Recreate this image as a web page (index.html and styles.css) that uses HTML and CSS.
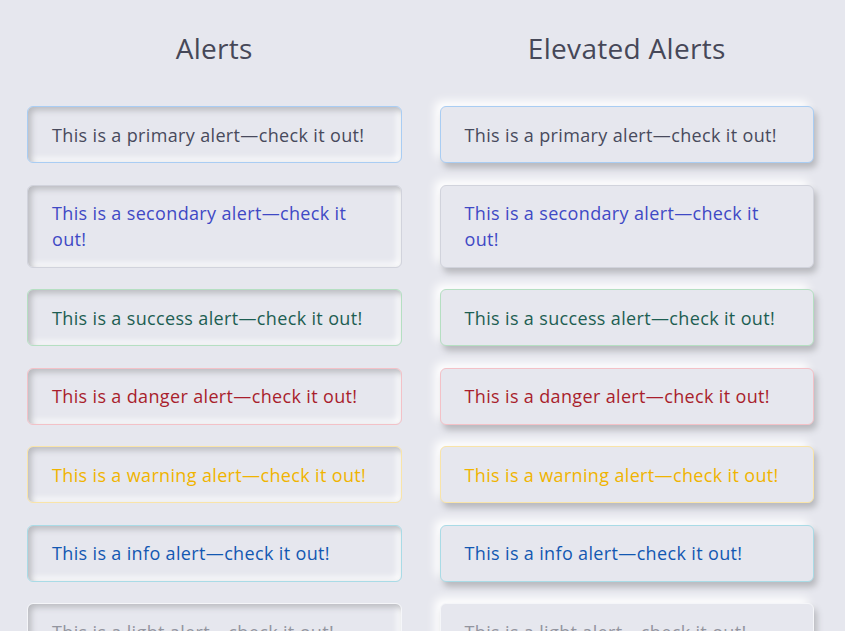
FILE: index.html
```html
<!DOCTYPE html>
<html lang="en">
<head>
  <meta charset="UTF-8" />
  <meta name="viewport" content="width=device-width, initial-scale=1.0" />
  <title>Alerts</title>
  <link rel="stylesheet" href="styles.css">
</head>
<body>

  <div class="page">
    <section class="column">
      <h2>Alerts</h2>
      <div class="alert-list">
        <div class="alert alert-primary">This is a primary alert—check it out!</div>
        <div class="alert alert-secondary">This is a secondary alert—check it out!</div>
        <div class="alert alert-success">This is a success alert—check it out!</div>
        <div class="alert alert-danger">This is a danger alert—check it out!</div>
        <div class="alert alert-warning">This is a warning alert—check it out!</div>
        <div class="alert alert-info">This is a info alert—check it out!</div>
        <div class="alert alert-light">This is a light alert—check it out!</div>
      </div>
    </section>

    <section class="column">
      <h2>Elevated Alerts</h2>
      <div class="alert-list elevated">
        <div class="alert alert-primary">This is a primary alert—check it out!</div>
        <div class="alert alert-secondary">This is a secondary alert—check it out!</div>
        <div class="alert alert-success">This is a success alert—check it out!</div>
        <div class="alert alert-danger">This is a danger alert—check it out!</div>
        <div class="alert alert-warning">This is a warning alert—check it out!</div>
        <div class="alert alert-info">This is a info alert—check it out!</div>
        <div class="alert alert-light">This is a light alert—check it out!</div>
      </div>
    </section>
  </div>

</body>
</html>
```
FILE: styles.css
```css
*, *::before, *::after { box-sizing: border-box; }

body {
  margin: 0;
  background-color: #e6e7ee;
  font-family: 'Open Sans', 'Noto Sans', sans-serif;
  color: #44476a;
}

.page {
  display: grid;
  grid-template-columns: 1fr 1fr;
  gap: 38px;
  padding: 31px 31px 40px 27px;
}

.column h2 {
  margin: 0 0 41px;
  font-size: 28px;
  line-height: 34px;
  font-weight: 400;
  letter-spacing: 0.3px;
  text-align: center;
  color: #464858;
}

.alert-list {
  display: flex;
  flex-direction: column;
  gap: 21.5px;
}

.alert {
  padding: 14.5px 24px;
  font-size: 18px;
  line-height: 26px;
  letter-spacing: 0.35px;
  border: 1px solid #d1d9e6;
  border-radius: 6px;
  background-color: #e6e7ee;
  box-shadow: inset 3px 3px 6px #b8b9be, inset -3px -3px 7px #ffffff;
}

.elevated .alert {
  box-shadow: 3px 5px 6px #b8b9be, -5px -5px 10px #ffffff;
}

.alert-primary { color: #484a5c; border-color: #a9cdf3; }
.alert-secondary { color: #3f49c5; border-color: #d1d3dc; }
.alert-success { color: #1d5e52; border-color: #b5dfc2; }
.alert-danger { color: #a91e2c; border-color: #f3c1c7; }
.alert-warning { color: #f0b400; border-color: #f9e4a8; }
.alert-info { color: #1358b2; border-color: #a9dbe6; }
.alert-light { color: #93959f; border-color: #f5f6f9; }
```
